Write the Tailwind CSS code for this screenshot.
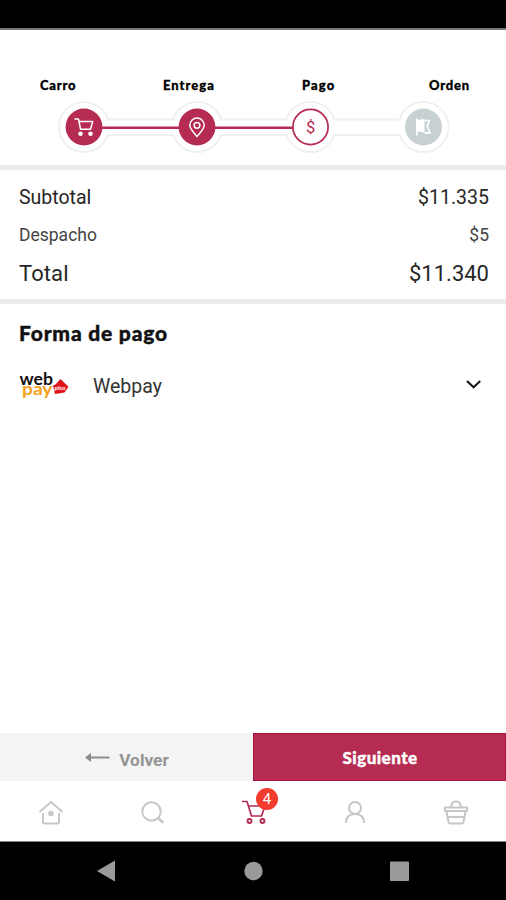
<!DOCTYPE html>
<html lang="es">
<head>
<meta charset="utf-8">
<meta name="viewport" content="width=device-width">
<title>Forma de pago</title>
<script src="https://cdn.jsdelivr.net/npm/@tailwindcss/browser@4"></script>
</head>
<body class="bg-white">
<div class="flex h-[900px] w-[506px] flex-col overflow-hidden bg-white font-['Roboto',sans-serif] text-[#262626]">
  <div class="h-[30px] shrink-0 border-b-2 border-[#777] bg-black"></div>

  <header class="h-[140px] shrink-0 border-b-[5px] border-[#ebebeb] pt-[45px]">
    <div class="flex h-5 items-center pl-10 font-['Lato',sans-serif] text-[13px] leading-5 font-black text-black [-webkit-text-stroke:0.3px_#000]">
      <span class="w-[123px] tracking-[0.8px]">Carro</span>
      <span class="w-[139px] tracking-[1px]">Entrega</span>
      <span class="w-[127px] tracking-[1.1px]">Pago</span>
      <span class="tracking-[0.8px]">Orden</span>
    </div>
    <svg class="block" width="506" height="62" viewBox="0 95 506 62" fill="none">
      <g fill="#fff" stroke="#eff1f1" stroke-width="2">
        <circle cx="84" cy="127" r="25"/><circle cx="197" cy="127" r="25"/><circle cx="310.500" cy="127" r="25"/><circle cx="423.500" cy="127" r="25"/>
        <rect x="103" y="119.500" width="301" height="15.500"/>
      </g>
      <g fill="#fff"><circle cx="84" cy="127" r="24"/><circle cx="197" cy="127" r="24"/><circle cx="310.500" cy="127" r="24"/><circle cx="423.500" cy="127" r="24"/></g>
      <path d="M84 127.700H293" stroke="#b52b51" stroke-width="2.500"/>
      <g fill="#b52b51"><circle cx="84" cy="127" r="18.400"/><circle cx="197" cy="127" r="18.400"/></g>
      <circle cx="310.500" cy="127" r="17.600" fill="#fff" stroke="#b52b51" stroke-width="1.700"/>
      <circle cx="423.500" cy="127" r="18.500" fill="#c7d1d4"/>
      <g stroke="#fff" stroke-width="1.500" stroke-linejoin="round" stroke-linecap="round">
        <path d="M75 119H78.500L80.500 129.200H90.500L92.700 121.600H79"/>
        <path d="M197 136.500C193.500 132.300 189.800 128.900 189.800 125.300A7.200 7.200 0 0 1 204.200 125.300C204.200 128.900 200.500 132.300 197 136.500Z"/>
        <circle cx="197" cy="125.300" r="2.900"/>
      </g>
      <g fill="#fff"><circle cx="80.500" cy="133.700" r="2.300"/><circle cx="90.500" cy="133.700" r="2.300"/>
        <path d="M416 118.500H417.700V135.500H416ZM417.500 120L424.500 119V132.500L417.500 131.500Z"/>
      </g>
      <path d="M424.500 120.500H429.300L427.300 126.300L430 132.800H424.500" stroke="#fff" stroke-width="1.700"/>
      <text x="310.700" y="132.800" text-anchor="middle" fill="#b52b51" font-family="Roboto, sans-serif" font-size="16.500">$</text>
    </svg>
  </header>

  <section class="h-[134px] shrink-0 border-b-[5px] border-[#ebebeb] pr-[17px] pl-[19px]">
    <div class="flex h-[56px] items-center justify-between text-[19.500px]"><span>Subtotal</span><span>$11.335</span></div>
    <div class="flex h-[18px] items-center justify-between text-[17.500px] text-[#444]"><span>Despacho</span><span>$5</span></div>
    <div class="flex h-[59px] items-center justify-between text-[22px]"><span class="tracking-[0.1px]">Total</span><span>$11.340</span></div>
  </section>

  <main class="grow pr-[24px] pl-[19px]">
    <h1 class="mt-[14px] h-[30px] font-['Lato',sans-serif] text-[21px] leading-[30px] font-black tracking-[0.8px] text-[#111] [-webkit-text-stroke:0.4px_#111]">Forma de pago</h1>
    <div class="mt-[17px] flex h-[40px] items-center">
      <svg class="overflow-visible" width="50" height="32" viewBox="19 368 50 32">
        <text x="19.500" y="383.500" font-family="Lato, sans-serif" font-weight="700" font-size="17" textLength="33.500" lengthAdjust="spacingAndGlyphs" fill="#111">web</text>
        <text x="22" y="394" font-family="Lato, sans-serif" font-weight="700" font-size="17" textLength="30.500" lengthAdjust="spacingAndGlyphs" fill="#f5a21b">pay</text>
        <path d="M53 384.500L55.500 383.500L60.500 378L68.500 385.700L64.500 391.500L55 393Z" fill="#e0141c"/>
        <text x="54.500" y="389" font-family="Lato, sans-serif" font-weight="700" font-style="italic" font-size="6" textLength="11" lengthAdjust="spacingAndGlyphs" fill="#fff">plus</text>
      </svg>
      <span class="ml-[24px] grow pt-[4px] text-[19.500px] text-[#333]">Webpay</span>
      <svg width="18" height="12" viewBox="0 0 18 12" fill="none" stroke="#1b1b1b" stroke-width="2.200"><path d="M3 2L9.600 8.200L16.200 2"/></svg>
    </div>
  </main>

  <div class="flex h-[48px] shrink-0">
    <button class="flex w-[253px] items-center justify-center bg-[#f4f4f4] text-[#949494]">
      <svg class="mt-[4px] mr-[9px]" width="26" height="12" viewBox="0 0 26 12"><path d="M1 4.500L7 0V9Z" fill="#8c8c8c"/><path d="M5 4.500H25.500" stroke="#8c8c8c" stroke-width="2"/></svg>
      <span class="pt-[5px] text-[17.300px] leading-5 font-bold">Volver</span>
    </button>
    <button class="grow border border-[#a81543] bg-[#b52b51] font-['Lato',sans-serif] text-[17px] font-black tracking-[0.45px] text-white [-webkit-text-stroke:0.4px_#fff]"><span class="block pt-px pl-px">Siguiente</span></button>
  </div>

  <nav class="relative h-[60px] shrink-0">
    <svg class="block" width="506" height="60" viewBox="0 781 506 60" fill="none" stroke="#c7c7c7" stroke-width="2" stroke-linejoin="round">
      <path d="M39.500 812L51 802L62.500 812M43 813V821.500Q43 823.500 45 823.500H57Q59 823.500 59 821.500V813"/><circle cx="51" cy="813.500" r="2.800" fill="#c7c7c7" stroke="none"/>
      <circle cx="151.500" cy="811.500" r="9.200"/><path d="M158 818L163.300 822.800" stroke-width="2.500"/>
      <path d="M242 801.500H247L251.500 816H261.500L265 806H248.500" stroke="#b52b51" stroke-width="1.700"/>
      <g stroke="#b52b51" stroke-width="1.900"><circle cx="249.500" cy="821" r="2"/><circle cx="262.500" cy="821" r="2"/></g>
      <circle cx="355" cy="808" r="6"/><path d="M346 823C346 816.500 350 814 355 814S364 816.500 364 823"/>
      <path d="M444.800 807.500H467.200V811H444.800ZM446.300 811L448.500 822Q449 823.500 450.500 823.500H461.500Q463 823.500 463.500 822L465.700 811M447.500 817H464.500M451 807C452 799.800 460 799.800 461 807"/>
    </svg>
    <span class="absolute top-[7px] left-[256px] flex size-[22px] items-center justify-center rounded-full bg-[#f33b2e] text-[15px] leading-none text-white">4</span>
  </nav>

  <footer class="h-[59px] shrink-0 border-t border-[#858585] bg-black">
    <svg class="block" width="506" height="58" viewBox="0 842 506 58" fill="#9a9a9a"><path d="M97 871L115 860.500V881.500Z"/><circle cx="253.500" cy="871" r="9.200"/><rect x="390" y="861.500" width="19" height="19.500" rx="1"/></svg>
  </footer>
</div>
</body>
</html>
